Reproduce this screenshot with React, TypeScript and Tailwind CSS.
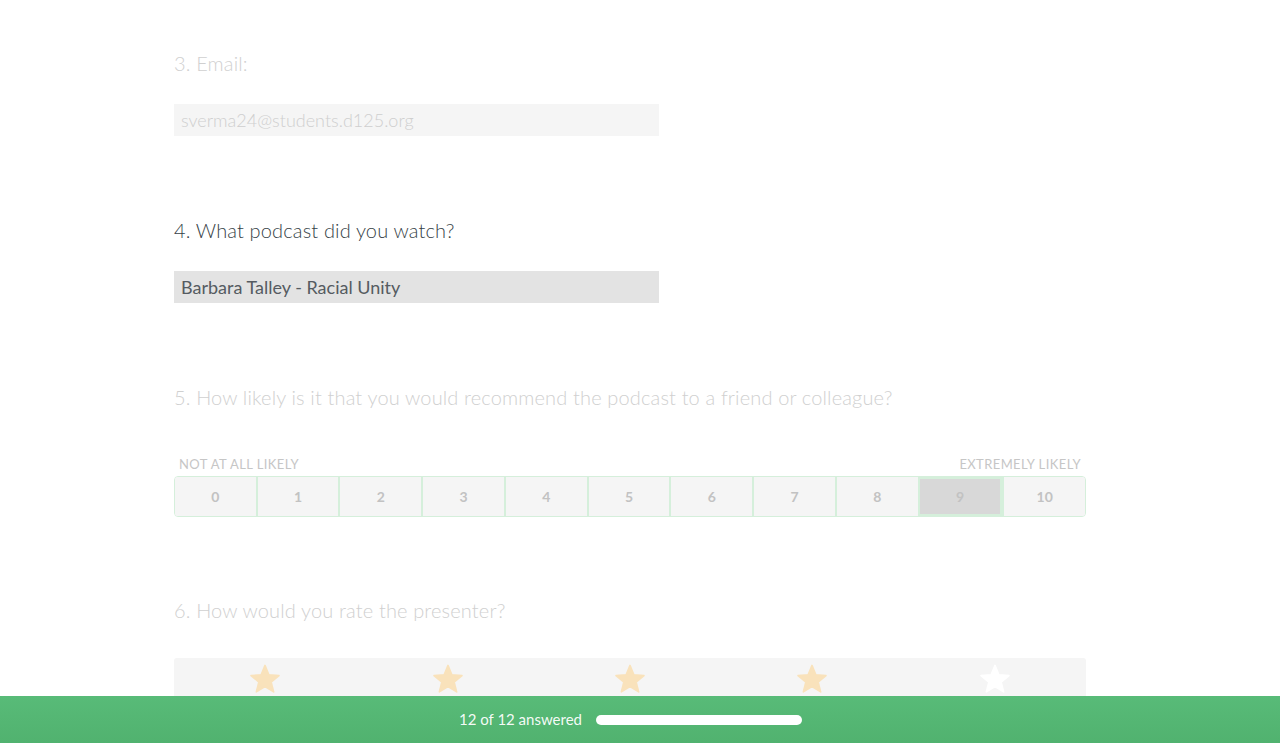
import React from 'react';

const font = { fontFamily: 'Lato, "Open Sans", sans-serif' };

const Star: React.FC<{ filled: boolean }> = ({ filled }) => (
  <svg viewBox="0 0 24 24" className="w-[32px] h-[32px]">
    <path
      d="M12 1.8l2.9 7.1 7.6.5-5.9 4.9 1.9 7.4L12 17.6l-6.5 4.1 1.9-7.4-5.9-4.9 7.6-.5z"
      fill={filled ? '#f9e2bb' : '#ffffff'}
      stroke={filled ? '#f9e2bb' : '#ffffff'}
      strokeWidth="1.2"
      strokeLinejoin="round"
    />
  </svg>
);

export default function App() {
  const nps = [0, 1, 2, 3, 4, 5, 6, 7, 8, 9, 10];

  return (
    <div className="min-h-screen bg-white" style={font}>
      <div className="w-[912px] ml-[174px] pt-[49px] pb-[120px]">
        {/* Q3 */}
        <div className="text-[20px] leading-[28px] font-light tracking-[0.15px] text-[#d0d0d0]">3. Email:</div>
        <div className="mt-[27px] w-[485px] h-[32px] bg-[#f5f5f5] px-[7px] flex items-center text-[18px] font-light text-[#cfcfcf]">
          sverma24@students.d125.org
        </div>

        {/* Q4 */}
        <div className="mt-[80px] text-[20px] leading-[28px] font-light tracking-[0.15px] text-[#363f47]">
          4. What podcast did you watch?
        </div>
        <div className="mt-[27px] w-[485px] h-[32px] bg-[#e3e3e3] px-[7px] flex items-center text-[18px] text-[#555b61]">
          Barbara Talley - Racial Unity
        </div>

        {/* Q5 */}
        <div className="mt-[80px] text-[20px] leading-[28px] font-light tracking-[0.15px] text-[#d0d0d0]">
          5. How likely is it that you would recommend the podcast to a friend or colleague?
        </div>
        <div className="mt-[45px] flex justify-between px-[5px] text-[13px] leading-[16px] uppercase text-[#c6c6c6] tracking-[0.4px]">
          <span>Not at all likely</span>
          <span>Extremely likely</span>
        </div>
        <div className="mt-[4px] flex h-[41px] border border-[#d5efdb] rounded-[4px] overflow-hidden">
          {nps.map((n) => (
            <div
              key={n}
              className={`flex-1 flex items-center justify-center text-[14px] font-bold text-[#c2c2c2] ${
                n > 0 ? 'border-l-2 border-[#d5efdb]' : ''
              } ${n === 9 ? 'bg-[#d8d8d8] border-[2px] border-[#d5efdb]' : 'bg-[#f5f5f5]'}`}
            >
              {n}
            </div>
          ))}
        </div>

        {/* Q6 */}
        <div className="mt-[79px] text-[20px] leading-[28px] font-light tracking-[0.15px] text-[#d0d0d0]">
          6. How would you rate the presenter?
        </div>
        <div className="mt-[34px] grid grid-cols-5 bg-[#f5f5f5] rounded-[3px] pt-[5px] pb-[20px]">
          {[1, 2, 3, 4, 5].map((i) => (
            <div key={i} className="flex justify-center">
              <Star filled={i < 5} />
            </div>
          ))}
        </div>
      </div>

      {/* Footer progress */}
      <div className="fixed bottom-0 left-0 right-0 h-[47px] bg-gradient-to-b from-[#58bb78] to-[#51b26f] flex items-center justify-center gap-[14px] pr-[19px]">
        <span className="text-[15px] text-white/95">12 of 12 answered</span>
        <div className="w-[206px] h-[10px] rounded-full bg-white" />
      </div>
    </div>
  );
}
